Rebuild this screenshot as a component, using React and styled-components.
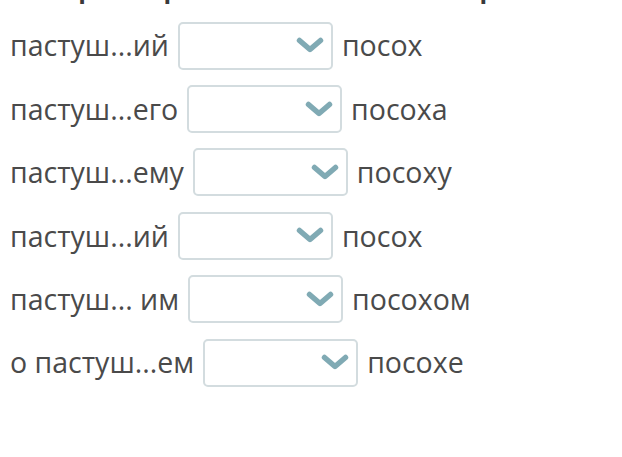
import React from 'react';
import styled, { createGlobalStyle } from 'styled-components';

const GlobalStyle = createGlobalStyle`
  html, body {
    margin: 0;
    padding: 0;
    background: #fff;
  }
  body {
    font-family: "Open Sans", "Noto Sans", sans-serif;
    color: #4a4a4a;
  }
`;

const Page = styled.div`
  width: 622px;
  height: 457px;
  overflow: hidden;
  background: #fff;
`;

const HeadingClip = styled.div`
  height: 5px;
  overflow: hidden;
  display: flex;
  align-items: flex-end;
  padding-left: 10px;
`;

const Heading = styled.div`
  font-size: 25px;
  line-height: 33px;
  font-weight: 700;
  color: #3a3a3a;
  white-space: nowrap;
`;

const List = styled.div`
  margin-top: 9px;
  padding-left: 10px;
  display: flex;
  flex-direction: column;
`;

const Row = styled.div`
  height: 63.4px;
  display: flex;
  align-items: center;
  gap: 9px;
  font-size: 28.5px;
  white-space: nowrap;
`;

const Word = styled.span`
  line-height: 1;
`;

const Select = styled.div`
  width: 155px;
  height: 48px;
  box-sizing: border-box;
  border: 2px solid #d3dcdf;
  border-radius: 5px;
  background: #fff;
  display: flex;
  align-items: center;
  justify-content: flex-end;
  padding-right: 7px;
`;

const Chevron = () => (
  <svg width="28" height="17" viewBox="0 0 28 17">
    <path
      d="M3.5 3.5 L14 12.5 L24.5 3.5"
      fill="none"
      stroke="#80aab4"
      strokeWidth="5.5"
      strokeLinecap="round"
      strokeLinejoin="round"
    />
  </svg>
);

const rows = [
  ['пастуш...ий', 'посох'],
  ['пастуш...его', 'посоха'],
  ['пастуш...ему', 'посоху'],
  ['пастуш...ий', 'посох'],
  ['пастуш... им', 'посохом'],
  ['о пастуш...ем', 'посохе'],
];

export default function App() {
  return (
    <Page>
      <GlobalStyle />
      <HeadingClip>
        <Heading>Выберите правильное окончание прилагательных</Heading>
      </HeadingClip>
      <List>
        {rows.map(([left, right], i) => (
          <Row key={i}>
            <Word>{left}</Word>
            <Select>
              <Chevron />
            </Select>
            <Word>{right}</Word>
          </Row>
        ))}
      </List>
    </Page>
  );
}
